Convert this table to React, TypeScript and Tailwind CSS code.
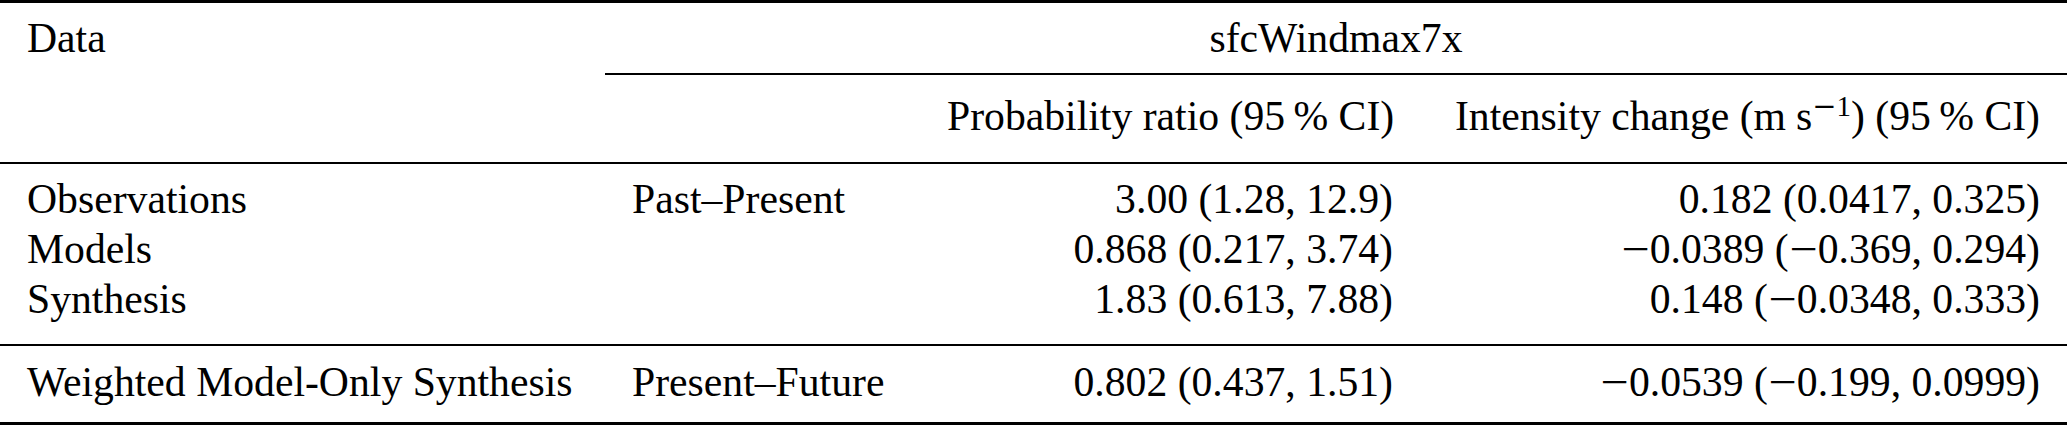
const cols = "grid grid-cols-[605px_315px_500px_647px]";
const cell = "px-[27px] whitespace-nowrap";

type Row = {
  label: string;
  period?: string;
  ratio: string;
  change: string;
};

const pastRows: Row[] = [
  { label: "Observations", period: "Past–Present", ratio: "3.00 (1.28, 12.9)", change: "0.182 (0.0417, 0.325)" },
  { label: "Models", ratio: "0.868 (0.217, 3.74)", change: "−0.0389 (−0.369, 0.294)" },
  { label: "Synthesis", ratio: "1.83 (0.613, 7.88)", change: "0.148 (−0.0348, 0.333)" },
];

const futureRows: Row[] = [
  {
    label: "Weighted Model-Only Synthesis",
    period: "Present–Future",
    ratio: "0.802 (0.437, 1.51)",
    change: "−0.0539 (−0.199, 0.0999)",
  },
];

// the math minus in the source is longer than the text font's one
function Num({ value }: { value: string }) {
  const parts = value.split("−");
  return (
    <>
      {parts.map((p, i) => (
        <span key={i}>
          {i > 0 && <span className="inline-block w-[29px] text-center scale-x-[1.2]">−</span>}
          {p}
        </span>
      ))}
    </>
  );
}

function DataRow({ row }: { row: Row }) {
  return (
    <div className={`${cols} h-[50px]`}>
      <div className={cell}>{row.label}</div>
      <div className={cell}>{row.period ?? ""}</div>
      <div className={`${cell} text-right`}>
        <Num value={row.ratio} />
      </div>
      <div className={`${cell} text-right`}>
        <Num value={row.change} />
      </div>
    </div>
  );
}

export default function App() {
  return (
    <div
      className="w-[2067px] h-[425px] bg-white text-black text-[41.7px] leading-[50px] flex flex-col overflow-hidden"
      style={{ fontFamily: '"Liberation Serif", "Times New Roman", serif' }}
    >
      {/* top rule */}
      <div className="h-[3px] bg-black" />

      {/* header row 1 */}
      <div className={`${cols} mt-[10px]`}>
        <div className={cell}>Data</div>
        <div className={`${cell} col-span-3 text-center`}>sfcWindmax7x</div>
      </div>
      <div className={`${cols} mt-[10px]`}>
        <div className="col-start-2 col-span-3 h-[2px] bg-black" />
      </div>

      {/* header row 2 */}
      <div className={`${cols} mt-[16px]`}>
        <div className={cell} />
        <div className={cell} />
        <div className={`${cell} text-right`}>Probability ratio (95&#8201;% CI)</div>
        <div className={`${cell} text-right`}>
          Intensity change (m<span className="pl-[10px]">s</span>
          <sup className="text-[29px]">
            <span style={{ fontFamily: '"DejaVu Serif", serif' }}>−</span>1
          </sup>
          ) (95&#8201;% CI)
        </div>
      </div>
      <div className="h-[2px] bg-black mt-[21px]" />

      {/* past–present block */}
      <div className="mt-[10px] flex flex-col">
        {pastRows.map((r) => (
          <DataRow key={r.label} row={r} />
        ))}
      </div>
      <div className="h-[2px] bg-black mt-[20px]" />

      {/* present–future block */}
      <div className="mt-[11px] flex flex-col">
        {futureRows.map((r) => (
          <DataRow key={r.label} row={r} />
        ))}
      </div>
      <div className="h-[3px] bg-black mt-auto" />
    </div>
  );
}
